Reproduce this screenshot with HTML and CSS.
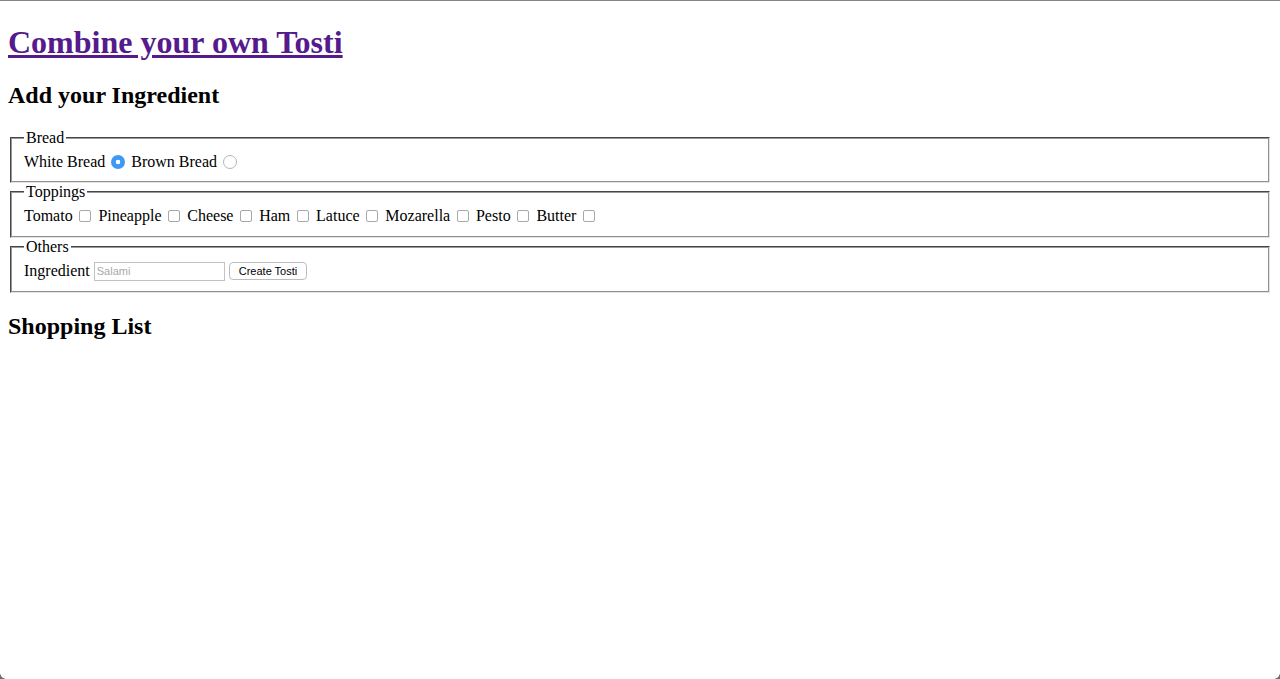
FILE: index.html
```html
<!DOCTYPE html>
<html lang="en">
<head>
<meta charset="utf-8">
<title>Combine your own Tosti</title>
<link rel="stylesheet" href="styles.css">
</head>
<body>
<h1 class="title"><a href="#" class="title-link">Combine your own Tosti</a></h1>
<h2 class="section-title">Add your Ingredient</h2>
<form class="tosti-form">
  <fieldset class="group">
    <legend class="group-legend">Bread</legend>
    <label class="opt">White Bread <input type="radio" name="bread" class="radio" checked></label>
    <label class="opt">Brown Bread <input type="radio" name="bread" class="radio"></label>
  </fieldset>
  <fieldset class="group">
    <legend class="group-legend">Toppings</legend>
    <label class="opt">Tomato <input type="checkbox" class="check"></label>
    <label class="opt">Pineapple <input type="checkbox" class="check"></label>
    <label class="opt">Cheese <input type="checkbox" class="check"></label>
    <label class="opt">Ham <input type="checkbox" class="check"></label>
    <label class="opt">Latuce <input type="checkbox" class="check"></label>
    <label class="opt">Mozarella <input type="checkbox" class="check"></label>
    <label class="opt">Pesto <input type="checkbox" class="check"></label>
    <label class="opt">Butter <input type="checkbox" class="check"></label>
  </fieldset>
  <fieldset class="group">
    <legend class="group-legend">Others</legend>
    <label class="opt">Ingredient <input type="text" class="text-input" placeholder="Salami"></label>
    <button type="button" class="btn">Create Tosti</button>
  </fieldset>
</form>
<h2 class="section-title">Shopping List</h2>
<div class="corner corner-left"></div>
<div class="corner corner-right"></div>
</body>
</html>
```
FILE: styles.css
```css
html {
  border-top: 1px solid #858585;
  background: #fff;
}
body {
  margin: 8px;
  font-family: "Liberation Serif", "Times New Roman", serif;
  font-size: 16px;
  color: #000;
}
.title {
  font-size: 32px;
  margin: 14.5px 0 21.44px;
}
.title-link {
  color: #551a8b;
}
.section-title {
  font-size: 24px;
  margin: 19.92px 0;
}
.tosti-form {
  margin: 0;
}
.group {
  margin: 0 2px;
  padding: 6px 12px 10.5px;
  border: 2px groove #c0c0c0;
  border-color: #9a9a9a #e4e4e4 #e4e4e4 #9a9a9a;
  border-style: groove;
}
.group-legend {
  padding: 0 2px;
}
.opt {
  white-space: nowrap;
}
.radio {
  -webkit-appearance: none;
  appearance: none;
  width: 14px;
  height: 14px;
  margin: 0 2px 0 2px;
  border: 1px solid #b5b5b5;
  border-radius: 50%;
  background: #fff;
  vertical-align: -2px;
  box-sizing: border-box;
}
.radio:checked {
  border: none;
  background: radial-gradient(circle, #fff 0 2px, #3d98f6 2.6px);
}
.check {
  -webkit-appearance: none;
  appearance: none;
  width: 12px;
  height: 12px;
  margin: 0 3px 0 2.75px;
  border: 1px solid #a8a8a8;
  border-radius: 2px;
  background: #fff;
  vertical-align: -1px;
  box-sizing: border-box;
}
.text-input {
  width: 131px;
  height: 19px;
  box-sizing: border-box;
  margin: 0;
  padding: 1px 2px;
  border: 1px solid #c2c2c2;
  font-family: "Liberation Sans", Arial, sans-serif;
  font-size: 11px;
  vertical-align: 1px;
}
.text-input::placeholder {
  color: #a9a9a9;
}
.btn {
  height: 18px;
  margin: 0;
  padding: 0 9px;
  border: 1px solid #bdbdbd;
  border-radius: 4px;
  background: #fff;
  font-family: "Liberation Sans", Arial, sans-serif;
  font-size: 11px;
  color: #000;
  vertical-align: 1px;
}
.corner {
  position: fixed;
  bottom: 0;
  width: 6px;
  height: 6px;
  background: #6e6e6e;
}
.corner-left {
  left: 0;
  -webkit-mask: radial-gradient(circle at 100% 0, transparent 5.5px, #000 6px);
  mask: radial-gradient(circle at 100% 0, transparent 5.5px, #000 6px);
}
.corner-right {
  right: 0;
  -webkit-mask: radial-gradient(circle at 0 0, transparent 5.5px, #000 6px);
  mask: radial-gradient(circle at 0 0, transparent 5.5px, #000 6px);
}
```
